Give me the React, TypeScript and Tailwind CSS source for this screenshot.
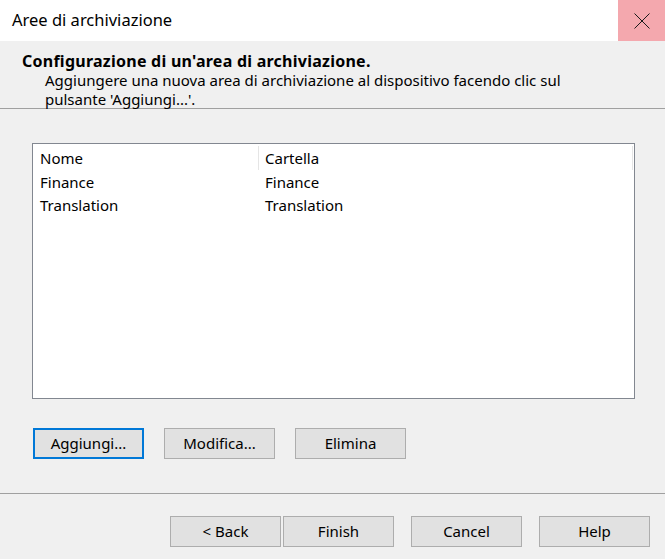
import React from 'react';

const rows = [
  { name: 'Finance', folder: 'Finance' },
  { name: 'Translation', folder: 'Translation' },
];

const Btn: React.FC<{ label: string; focused?: boolean }> = ({ label, focused }) => (
  <button
    className={
      'w-[111px] h-[31px] bg-[#e1e1e1] text-[15px] text-black flex items-center justify-center ' +
      (focused ? 'border-2 border-[#0078d7]' : 'border border-[#adadad]')
    }
  >
    {label}
  </button>
);

const App: React.FC = () => {
  return (
    <div
      className="w-[665px] h-[559px] bg-[#f0f0f0] flex flex-col text-black overflow-hidden"
      style={{ fontFamily: '"Segoe UI", "Noto Sans", sans-serif' }}
    >
      {/* title bar */}
      <div className="h-[41px] bg-white flex items-stretch shrink-0">
        <div className="flex-1 pl-[12px] flex items-center text-[16.5px] pb-[1px]">Aree di archiviazione</div>
        <div className="w-[47px] bg-[#f4a8ae] flex items-center justify-center">
          <svg width="16" height="16" viewBox="0 0 16 16" fill="none" stroke="#1a1a1a" strokeWidth="1">
            <path d="M0.5 0.5 L15.5 15.5 M15.5 0.5 L0.5 15.5" />
          </svg>
        </div>
      </div>

      {/* header */}
      <div className="h-[68px] shrink-0 border-b border-[#a0a0a0] pl-[22px] pt-[11px]">
        <div className="font-bold text-[16px] tracking-[0.25px] leading-[19px]">
          Configurazione di un'area di archiviazione.
        </div>
        <div className="pl-[23px] text-[15px] leading-[19px]">
          <div>Aggiungere una nuova area di archiviazione al dispositivo facendo clic sul</div>
          <div>pulsante 'Aggiungi...'.</div>
        </div>
      </div>

      {/* list */}
      <div className="pl-[32px] pt-[34px] shrink-0">
        <div className="w-[603px] h-[256px] bg-white border border-[#828790] pt-[2px] text-[15px]">
          <div className="flex h-[24px] items-center">
            <div className="w-[226px] pl-[7px] h-full flex items-center border-r border-[#e5e5e5]">Nome</div>
            <div className="flex-1 pl-[6px] h-full flex items-center border-r border-[#e5e5e5] mr-[1px]">Cartella</div>
          </div>
          {rows.map((r) => (
            <div key={r.name} className="flex h-[23.5px] items-center">
              <div className="w-[226px] pl-[7px]">{r.name}</div>
              <div className="flex-1 pl-[6px]">{r.folder}</div>
            </div>
          ))}
        </div>
      </div>

      {/* action buttons */}
      <div className="flex gap-[20px] pl-[33px] pt-[29px] shrink-0">
        <Btn label="Aggiungi..." focused />
        <Btn label="Modifica..." />
        <Btn label="Elimina" />
      </div>

      {/* separator */}
      <div className="mt-[34px] h-px bg-[#a0a0a0] shrink-0" />

      {/* wizard buttons */}
      <div className="flex justify-end pr-[15px] pt-[22px] shrink-0">
        <div className="flex gap-[2px]">
          <Btn label="< Back" />
          <Btn label="Finish" />
        </div>
        <div className="ml-[17px]">
          <Btn label="Cancel" />
        </div>
        <div className="ml-[17px]">
          <Btn label="Help" />
        </div>
      </div>
    </div>
  );
};

export default App;
